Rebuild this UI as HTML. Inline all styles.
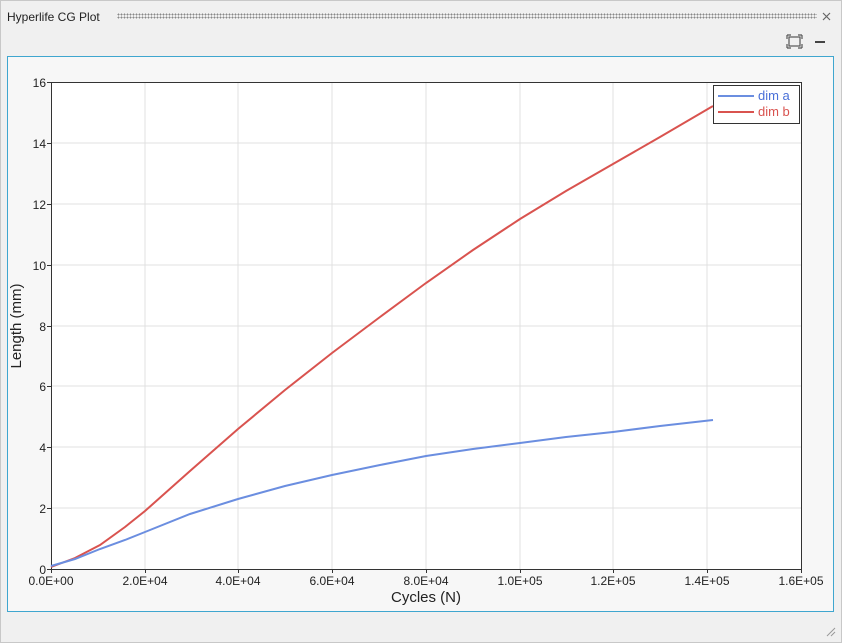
<!DOCTYPE html>
<html><head><style>
body{margin:0;width:842px;height:643px;background:#f0f0f0;font-family:"Liberation Sans",sans-serif;position:relative;overflow:hidden}
.win{position:absolute;left:0;top:0;width:840px;height:641px;border:1px solid #c8c8c8;background:#f0f0f0}
.title{position:absolute;left:7px;top:10px;font-size:12px;color:#222}
.dots{position:absolute;left:117px;top:13px;width:700px;height:6px;background-image:radial-gradient(circle,#888 0.8px,transparent 0.9px);background-size:3px 3px}
</style></head><body>
<div class="win"></div>
<div class="title">Hyperlife CG Plot</div>
<div class="dots"></div>
<svg style="position:absolute;left:0;top:0" width="842" height="643">
<path d="M823 13l7 7M830 13l-7 7" stroke="#666" stroke-width="1.2"/>
<rect x="789" y="37" width="11" height="9" fill="none" stroke="#555" stroke-width="1.2"/>
<path d="M787 35h4M787 35v4M798 35h4M802 35v4M787 48h4M787 48v-4M798 48h4M802 48v-4" stroke="#555" stroke-width="1.2"/>
<rect x="815" y="41" width="10" height="2" fill="#444"/>
<rect x="7.5" y="56.5" width="826" height="555" fill="#f7f7f7" stroke="#3fa6cf"/>
<rect x="51" y="82" width="750" height="487" fill="#fff"/>
<g stroke="#e0e0e0" stroke-width="1">
<path d="M145 82v487M238 82v487M332 82v487M426 82v487M520 82v487M613 82v487M707 82v487"/>
<path d="M51 143h750M51 204h750M51 265h750M51 326h750M51 386h750M51 447h750M51 508h750"/>
</g>
<rect x="51.5" y="82.5" width="750" height="487" fill="none" stroke="#333"/>
<g stroke="#333"><path d="M47 82.5h4M47 143.5h4M47 204.5h4M47 265.5h4M47 326.5h4M47 386.5h4M47 447.5h4M47 508.5h4M47 569.5h4"/>
<path d="M51.5 569v4M145.5 569v4M238.5 569v4M332.5 569v4M426.5 569v4M520.5 569v4M613.5 569v4M707.5 569v4M801.5 569v4"/></g>
<g font-family="Liberation Sans,sans-serif" font-size="12" fill="#222" text-anchor="end">
<text x="46" y="87">16</text><text x="46" y="148">14</text><text x="46" y="209">12</text><text x="46" y="270">10</text><text x="46" y="331">8</text><text x="46" y="391">6</text><text x="46" y="452">4</text><text x="46" y="513">2</text><text x="46" y="574">0</text>
</g>
<g font-family="Liberation Sans,sans-serif" font-size="12" fill="#222" text-anchor="middle">
<text x="51" y="585">0.0E+00</text><text x="145" y="585">2.0E+04</text><text x="238" y="585">4.0E+04</text><text x="332" y="585">6.0E+04</text><text x="426" y="585">8.0E+04</text><text x="520" y="585">1.0E+05</text><text x="613" y="585">1.2E+05</text><text x="707" y="585">1.4E+05</text><text x="801" y="585">1.6E+05</text>
<text x="426" y="602" font-size="15">Cycles (N)</text>
<text transform="translate(21 326) rotate(-90)" font-size="15">Length (mm)</text>
</g>
<polyline fill="none" stroke="#d9534f" stroke-width="2" points="51,567 75,558 100,545 125,527 145,511 190,471 238,429 285,390 332,353 380,317 426,283 473,250 520,219 566,191 613,164 660,137 713,106"/>
<polyline fill="none" stroke="#6b8ee0" stroke-width="2" points="51,566 75,559 100,549 125,540 145,532 190,514 238,499 285,486 332,475 380,465 426,456 473,449 520,443 566,437 613,432 660,426 713,420"/>
<rect x="713.5" y="85.5" width="86" height="38" fill="#fff" stroke="#333"/>
<path d="M718 96h36" stroke="#6b8ee0" stroke-width="2"/><path d="M718 112h36" stroke="#d9534f" stroke-width="2"/>
<text x="758" y="100" font-family="Liberation Sans,sans-serif" font-size="13" fill="#4a70d8">dim a</text>
<text x="758" y="116" font-family="Liberation Sans,sans-serif" font-size="13" fill="#d9534f">dim b</text>
<path d="M827 636l8-8M831 636l4-4" stroke="#999"/>
</svg>
</body></html>
